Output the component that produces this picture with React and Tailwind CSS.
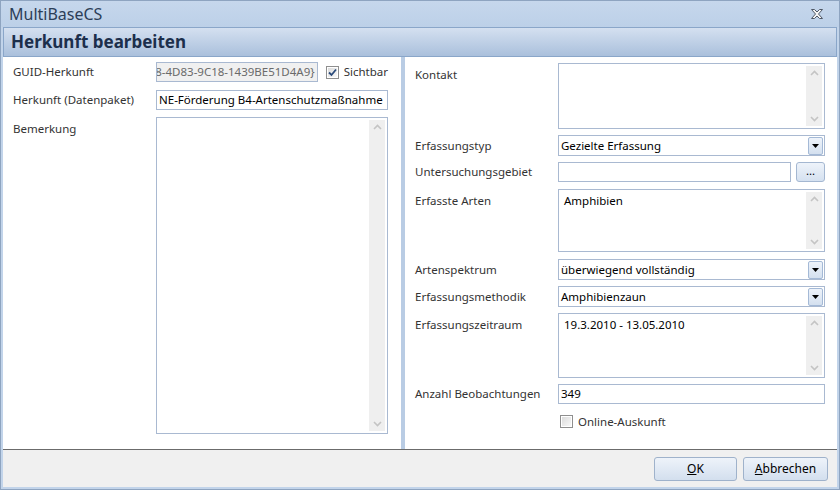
import React from 'react';

const font = "font-['Noto_Sans','Open_Sans',sans-serif]";

const ScrollBar = () => (
    <div className="absolute top-[2px] right-[2px] bottom-[2px] w-[16px] bg-[#efefef] flex flex-col justify-between items-center py-[4px]">
        <svg width="9" height="6" viewBox="0 0 9 6">
            <path d="M1 5 L4.5 1.5 L8 5" fill="none" stroke="#c4c4c4" strokeWidth="1.6" />
        </svg>
        <svg width="9" height="6" viewBox="0 0 9 6">
            <path d="M1 1 L4.5 4.5 L8 1" fill="none" stroke="#c4c4c4" strokeWidth="1.6" />
        </svg>
    </div>
);

const Memo = ({ h, children }) => (
    <div className={`relative flex-1 border border-[#a9b9d1] bg-white pl-[5px] pt-[2px] text-black ${h}`}>
        {children}
        <ScrollBar />
    </div>
);

const TextBox = ({ children, className = '' }) => (
    <div className={`h-[20px] border border-[#a9b9d1] bg-white px-[2px] leading-[18px] text-black whitespace-nowrap overflow-hidden ${className}`}>
        {children}
    </div>
);

const Combo = ({ value }) => (
    <div className="flex-1 h-[21px] border border-[#a9b9d1] bg-white flex items-center pl-[2px] pr-[1px] text-black">
        <span className="flex-1">{value}</span>
        <div className="w-[15px] h-[18px] rounded-[2px] border border-[#a4b9d6] bg-gradient-to-b from-[#eef3fa] to-[#d4e0ef] flex items-center justify-center">
            <svg width="7" height="4" viewBox="0 0 7 4">
                <path d="M0 0 H7 L3.5 4 Z" fill="#000" />
            </svg>
        </div>
    </div>
);

const CheckBox = ({ checked }) => (
    <div className="w-[13px] h-[13px] border border-[#8f8f8f] bg-white p-[1px]">
        <div className="w-full h-full bg-gradient-to-br from-[#dcdcdc] to-[#f8f8f8] flex items-center justify-center">
            {checked && (
                <svg width="9" height="9" viewBox="0 0 9 9">
                    <path d="M1 4.5 L3.5 7 L8 1.5" fill="none" stroke="#2a4a7a" strokeWidth="1.8" />
                </svg>
            )}
        </div>
    </div>
);

const Label = ({ children, top }) => (
    <span className={`w-[143px] shrink-0 text-[#333] ${top ? 'pt-[3px]' : ''}`}>{children}</span>
);

const Button = ({ children, w }) => (
    <button className={`h-[24px] ${w} rounded-[3px] border border-[#9fb2cb] bg-gradient-to-b from-[#eef3fa] to-[#d3dfee] text-black text-[12px]`}>
        {children}
    </button>
);

export default function App() {
    return (
        <div className={`w-[840px] h-[490px] flex flex-col bg-[#c2d4ea] border border-[#8ea4c0] text-[11.5px] ${font}`}>
            {/* Title bar */}
            <div className="h-[26px] shrink-0 flex items-center justify-between pl-[8px] pr-[16px] bg-gradient-to-b from-[#c6d7ec] to-[#bcd0e8]">
                <span className="text-[16px] text-[#2c3e58]">MultiBaseCS</span>
                <svg width="12" height="10" viewBox="0 0 12 10">
                    <polygon points="0.5,0.5 3.5,0.5 6,3 8.5,0.5 11.5,0.5 7.5,5 11.5,9.5 8.5,9.5 6,7 3.5,9.5 0.5,9.5 4.5,5" fill="#f4f4f4" stroke="#4f5866" strokeWidth="1" />
                </svg>
            </div>

            {/* Header */}
            <div className="mx-[2px] h-[30px] shrink-0 flex items-center px-[7px] border border-[#8aa6c9] bg-gradient-to-b from-[#d4e0f0] to-[#aac0dc]">
                <span className="text-[17px] font-bold text-[#1c2f4c]">Herkunft bearbeiten</span>
            </div>

            {/* Body */}
            <div className="flex-1 flex mx-[2px] bg-white">
                {/* Left panel */}
                <div className="w-[398px] flex flex-col pl-[10px] pr-[13px] pt-[5px] pb-[15px] gap-[7px]">
                    <div className="flex items-center">
                        <Label>GUID-Herkunft</Label>
                        <div className="w-[162px] h-[20px] border border-[#a9b9d1] bg-[#f0f0f0] text-[#6a6a6a] flex justify-end overflow-hidden whitespace-nowrap leading-[18px] pr-[2px]">
                            <span>48-4D83-9C18-1439BE51D4A9{'}'}</span>
                        </div>
                        <div className="ml-[8px] mr-[5px]"><CheckBox checked /></div>
                        <span className="text-[#333]">Sichtbar</span>
                    </div>
                    <div className="flex items-center mt-[1px]">
                        <Label>Herkunft (Datenpaket)</Label>
                        <TextBox className="flex-1">NE-Förderung B4-Artenschutzmaßnahme</TextBox>
                    </div>
                    <div className="flex flex-1">
                        <Label top>Bemerkung</Label>
                        <Memo h="h-full" />
                    </div>
                </div>

                {/* Splitter */}
                <div className="w-[4px] bg-[#b9cce4]" />

                {/* Right panel */}
                <div className="flex-1 flex flex-col pl-[10px] pr-[12px] pt-[6px]">
                    <div className="flex">
                        <Label top>Kontakt</Label>
                        <Memo h="h-[66px]" />
                    </div>
                    <div className="flex items-center mt-[6px]">
                        <Label>Erfassungstyp</Label>
                        <Combo value="Gezielte Erfassung" />
                    </div>
                    <div className="flex items-center mt-[6px]">
                        <Label>Untersuchungsgebiet</Label>
                        <TextBox className="flex-1" />
                        <button className="ml-[5px] w-[29px] h-[20px] rounded-[3px] border border-[#a4b7d1] bg-gradient-to-b from-[#eef3fa] to-[#d5e1f0] text-black leading-none pb-[3px]">...</button>
                    </div>
                    <div className="flex mt-[7px]">
                        <Label top>Erfasste Arten</Label>
                        <Memo h="h-[63px]">Amphibien</Memo>
                    </div>
                    <div className="flex items-center mt-[7px]">
                        <Label>Artenspektrum</Label>
                        <Combo value="überwiegend vollständig" />
                    </div>
                    <div className="flex items-center mt-[6px]">
                        <Label>Erfassungsmethodik</Label>
                        <Combo value="Amphibienzaun" />
                    </div>
                    <div className="flex mt-[6px]">
                        <Label top>Erfassungszeitraum</Label>
                        <Memo h="h-[65px]">19.3.2010 - 13.05.2010</Memo>
                    </div>
                    <div className="flex items-center mt-[6px]">
                        <Label>Anzahl Beobachtungen</Label>
                        <TextBox className="flex-1">349</TextBox>
                    </div>
                    <div className="flex items-center mt-[9px] pl-[145px] gap-[5px]">
                        <CheckBox />
                        <span className="text-[#333]">Online-Auskunft</span>
                    </div>
                </div>
            </div>

            {/* Footer */}
            <div className="h-[38px] shrink-0 mx-[2px] mb-[2px] border-t border-[#6b6b6b] bg-[#f0f0f0] flex items-center justify-end gap-[6px] pr-[9px]">
                <Button w="w-[83px]"><u>O</u>K</Button>
                <Button w="w-[85px]"><u>A</u>bbrechen</Button>
            </div>
        </div>
    );
}
